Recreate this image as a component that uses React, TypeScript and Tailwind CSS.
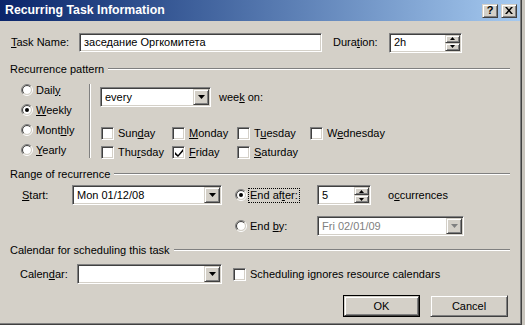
import React from "react";

const sunken =
  "bg-white border border-t-[#808080] border-l-[#808080] border-r-white border-b-white shadow-[inset_1px_1px_0_#404040,inset_-1px_-1px_0_#d4d0c8]";
const raised =
  "bg-[#d4d0c8] border border-t-[#d4d0c8] border-l-[#d4d0c8] border-r-[#404040] border-b-[#404040] shadow-[inset_1px_1px_0_#ffffff,inset_-1px_-1px_0_#808080]";

const U = ({ children }: { children: React.ReactNode }) => (
  <span className="underline underline-offset-[1px] decoration-1">{children}</span>
);

const Arrow = ({ color = "#000" }: { color?: string }) => (
  <svg width="7" height="4" viewBox="0 0 7 4">
    <path d="M0 0 L7 0 L3.5 4 Z" fill={color} />
  </svg>
);

const Combo = ({
  value,
  width,
  disabled = false,
}: {
  value: string;
  width: string;
  disabled?: boolean;
}) => (
  <div className={`${sunken} ${width} h-[20px] flex p-[1px]`}>
    <span
      className={`flex-1 flex items-center pl-[3px] ${disabled ? "text-[#808080]" : "text-black"}`}
    >
      {value}
    </span>
    <div className={`${raised} w-[16px] flex items-center justify-center`}>
      <Arrow color={disabled ? "#808080" : "#000"} />
    </div>
  </div>
);

const SpinField = ({ value, width }: { value: string; width: string }) => (
  <div className={`${sunken} ${width} h-[20px] flex p-[1px]`}>
    <span className="flex-1 flex items-center pl-[3px]">{value}</span>
    <div className="w-[15px] flex flex-col">
      <div className={`${raised} flex-1 flex items-center justify-center`}>
        <svg width="5" height="3" viewBox="0 0 5 3">
          <path d="M2.5 0 L5 3 L0 3 Z" fill="#000" />
        </svg>
      </div>
      <div className={`${raised} flex-1 flex items-center justify-center`}>
        <svg width="5" height="3" viewBox="0 0 5 3">
          <path d="M0 0 L5 0 L2.5 3 Z" fill="#000" />
        </svg>
      </div>
    </div>
  </div>
);

const arc = (r: number) => {
  const d = r * Math.SQRT1_2;
  return {
    tl: `M${6 - d} ${6 + d} A${r} ${r} 0 0 1 ${6 + d} ${6 - d}`,
    br: `M${6 + d} ${6 - d} A${r} ${r} 0 0 1 ${6 - d} ${6 + d}`,
  };
};

const Radio = ({ checked = false }: { checked?: boolean }) => {
  const o = arc(5.5);
  const i = arc(4.5);
  return (
    <svg width="12" height="12" viewBox="0 0 12 12" className="shrink-0">
      <circle cx="6" cy="6" r="4" fill="#fff" />
      <path d={o.tl} stroke="#808080" fill="none" />
      <path d={o.br} stroke="#ffffff" fill="none" />
      <path d={i.tl} stroke="#404040" fill="none" />
      <path d={i.br} stroke="#d4d0c8" fill="none" />
      {checked && <circle cx="6" cy="6" r="2" fill="#000" />}
    </svg>
  );
};

const Check = ({ checked = false }: { checked?: boolean }) => (
  <div className={`${sunken} w-[13px] h-[13px] shrink-0 flex items-center justify-center`}>
    {checked && (
      <svg width="8" height="8" viewBox="0 0 8 8">
        <path d="M0 3 L3 6 L8 0 L8 2.5 L3 8 L0 5.5 Z" fill="#000" />
      </svg>
    )}
  </div>
);

const GroupHeader = ({ label }: { label: string }) => (
  <div className="h-[14px] flex items-center">
    <span>{label}</span>
    <div className="flex-1 ml-[4px] border-t border-t-[#808080] border-b border-b-white" />
  </div>
);

const DayBox = ({
  w,
  checked = false,
  children,
}: {
  w: string;
  checked?: boolean;
  children: React.ReactNode;
}) => (
  <div className={`${w} flex items-center gap-[4px]`}>
    <Check checked={checked} />
    <span>{children}</span>
  </div>
);

const RadioRow = ({ checked = false, children }: { checked?: boolean; children: React.ReactNode }) => (
  <div className="h-[20px] flex items-center gap-[3px]">
    <Radio checked={checked} />
    <span>{children}</span>
  </div>
);

const TitleButton = ({ children }: { children: React.ReactNode }) => (
  <div
    className={`${raised} w-[16px] h-[14px] flex items-center justify-center text-[11px] font-bold leading-none text-black`}
  >
    {children}
  </div>
);

export default function App() {
  return (
    <div className="w-[525px] h-[325px] bg-[#c8c4bc] font-['Liberation_Sans',Arial,sans-serif] text-[11px] text-black leading-none select-none">
      <div className="w-[522px] h-[325px] bg-[#d4d0c8] flex flex-col border-r border-b border-r-[#404040] border-b-[#404040] shadow-[inset_-1px_-1px_0_#808080]">
        {/* title bar */}
        <div className="h-[21px] mr-[1px] bg-gradient-to-r from-[#0a246a] to-[#a6caf0] flex items-center pl-[5px] pr-[3px]">
          <span className="flex-1 text-white font-bold text-[12.3px]">Recurring Task Information</span>
          <TitleButton>?</TitleButton>
          <div className="w-[3px]" />
          <TitleButton>
            <svg width="8" height="7" viewBox="0 0 8 7">
              <path d="M0 0 L2 0 L4 2.5 L6 0 L8 0 L5 3.5 L8 7 L6 7 L4 4.5 L2 7 L0 7 L3 3.5 Z" fill="#000" />
            </svg>
          </TitleButton>
        </div>

        <div className="flex flex-col pl-[10px] pr-[11px]">
          {/* task name row */}
          <div className="mt-[12px] h-[19px] flex items-center">
            <span className="w-[69px] pl-[1px]">
              <U>T</U>ask Name:
            </span>
            <div className={`${sunken} w-[243px] h-[19px] flex items-center pl-[4px]`}>
              заседание Оргкомитета
            </div>
            <span className="ml-[11px] w-[56px]">
              Dura<U>t</U>ion:
            </span>
            <SpinField value="2h" width="w-[73px]" />
          </div>

          {/* recurrence pattern */}
          <div className="mt-[10px]">
            <GroupHeader label="Recurrence pattern" />
          </div>
          <div className="h-[86px] flex">
            <div className="ml-[11px] w-[68px] mt-[4px] flex flex-col">
              <RadioRow>
                Dail<U>y</U>
              </RadioRow>
              <RadioRow checked>
                <U>W</U>eekly
              </RadioRow>
              <RadioRow>
                Mont<U>h</U>ly
              </RadioRow>
              <RadioRow>
                <U>Y</U>early
              </RadioRow>
            </div>
            <div className="mt-[8px] h-[74px] border-l border-l-[#808080] border-r border-r-white" />
            <div className="ml-[9px] flex flex-col">
              <div className="mt-[11px] flex items-center">
                <Combo value="every" width="w-[111px]" />
                <span className="ml-[8px]">
                  wee<U>k</U> on:
                </span>
              </div>
              <div className="mt-[17px] h-[20px] flex items-center pl-[1px]">
                <DayBox w="w-[71px]">
                  Sun<U>d</U>ay
                </DayBox>
                <DayBox w="w-[65px]">
                  <U>M</U>onday
                </DayBox>
                <DayBox w="w-[73px]">
                  T<U>u</U>esday
                </DayBox>
                <DayBox w="w-[90px]">
                  W<U>e</U>dnesday
                </DayBox>
              </div>
              <div className="h-[20px] flex items-center pl-[1px]">
                <DayBox w="w-[71px]">
                  Thu<U>r</U>sday
                </DayBox>
                <DayBox w="w-[65px]" checked>
                  <U>F</U>riday
                </DayBox>
                <DayBox w="w-[73px]">
                  <U>S</U>aturday
                </DayBox>
              </div>
            </div>
          </div>

          {/* range of recurrence */}
          <div className="mt-[5px]">
            <GroupHeader label="Range of recurrence" />
          </div>
          <div className="mt-[4px] h-[20px] flex items-center">
            <span className="ml-[12px] w-[50px]">
              <U>S</U>tart:
            </span>
            <Combo value="Mon 01/12/08" width="w-[150px]" />
            <div className="ml-[13px] w-[82px] flex items-center gap-[1px]">
              <Radio checked />
              <span className="border border-dotted border-black px-[1px] py-[1px]">
                End af<U>t</U>er:
              </span>
            </div>
            <SpinField value="5" width="w-[54px]" />
            <span className="ml-[17px]">
              o<U>c</U>currences
            </span>
          </div>
          <div className="mt-[11px] h-[20px] flex items-center">
            <div className="ml-[225px] w-[82px] flex items-center gap-[3px]">
              <Radio />
              <span>
                End <U>b</U>y:
              </span>
            </div>
            <Combo value="Fri 02/01/09" width="w-[147px]" disabled />
          </div>

          {/* calendar */}
          <div className="mt-[7px]">
            <GroupHeader label="Calendar for scheduling this task" />
          </div>
          <div className="mt-[7px] h-[20px] flex items-center">
            <span className="ml-[10px] w-[57px]">
              Calen<U>d</U>ar:
            </span>
            <Combo value="" width="w-[145px]" />
            <div className="ml-[11px] flex items-center gap-[4px]">
              <Check />
              <span>
                Schedulin<U>g</U> ignores resource calendars
              </span>
            </div>
          </div>

          {/* buttons */}
          <div className="mt-[11px] flex justify-end gap-[10px] mr-[2px]">
            <div className="w-[77px] h-[22px] border border-black">
              <div className={`${raised} w-full h-full flex items-center justify-center`}>OK</div>
            </div>
            <div className={`${raised} w-[78px] h-[22px] flex items-center justify-center`}>Cancel</div>
          </div>
        </div>
      </div>
    </div>
  );
}
